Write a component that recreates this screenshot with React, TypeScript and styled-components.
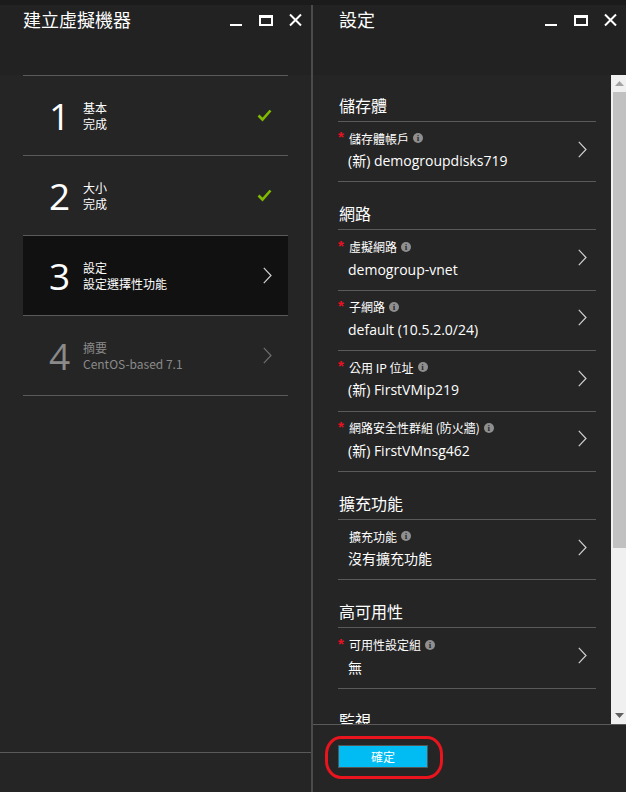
import React from "react";
import styled, { createGlobalStyle } from "styled-components";

const Global = createGlobalStyle`
  html, body { margin: 0; padding: 0; background: #252525; overflow: hidden; }
  body { font-family: "Segoe UI", "Open Sans", "Noto Sans CJK TC", sans-serif; color: #fff; }
  * { box-sizing: border-box; }
`;

const Screen = styled.div`
  width: 626px;
  height: 792px;
  display: flex;
  flex-direction: column;
  background: #1b1b1b;
  padding-top: 5px;
`;

const Blades = styled.div`
  flex: 1;
  display: flex;
  min-height: 0;
`;

const Blade = styled.section<{ $width?: number; $divider?: boolean }>`
  ${(p) => (p.$width ? `width: ${p.$width}px; flex: none;` : "flex: 1; min-width: 0;")}
  display: flex;
  flex-direction: column;
  background: #252525;
  border-right: ${(p) => (p.$divider ? "2px solid #4b4b4b" : "none")};
`;

const Header = styled.header<{ $pad: number }>`
  height: 70px;
  flex: none;
  background: #222222;
  display: flex;
  align-items: flex-start;
  justify-content: space-between;
  padding: 1px 9px 0 ${(p) => p.$pad}px;
`;

const Title = styled.h1`
  margin: 0;
  font-family: "Noto Sans CJK TC", sans-serif;
  font-weight: 400;
  font-size: 18px;
  line-height: 26px;
  color: #fff;
`;

const Controls = styled.div`
  display: flex;
  align-items: center;
  gap: 16px;
  height: 26px;
  padding-top: 1px;
`;

const Ctl = styled.svg`
  display: block;
  flex: none;
`;

function WindowControls() {
  return (
    <Controls>
      <Ctl width="13" height="14" viewBox="0 0 13 14">
        <rect x="0" y="11" width="12" height="2" fill="#fff" />
      </Ctl>
      <Ctl width="14" height="14" viewBox="0 0 14 14">
        <rect x="1" y="3" width="12" height="9" fill="none" stroke="#fff" strokeWidth="2" />
        <rect x="0" y="2" width="14" height="3" fill="#fff" />
      </Ctl>
      <Ctl width="13" height="14" viewBox="0 0 13 14">
        <path d="M1 1.5 L12 12.5 M12 1.5 L1 12.5" stroke="#fff" strokeWidth="2" />
      </Ctl>
    </Controls>
  );
}

/* ---------- left blade ---------- */

const LeftBody = styled.div`
  flex: 1;
  display: flex;
  flex-direction: column;
  min-height: 0;
`;

const StepList = styled.ul`
  list-style: none;
  margin: 0 23px;
  padding: 0;
  border-top: 1px solid #5a5a5a;
`;

const Step = styled.li<{ $active?: boolean; $disabled?: boolean }>`
  height: 80px;
  border-bottom: 1px solid #5a5a5a;
  display: flex;
  align-items: center;
  padding: 0 16px 0 26px;
  background: ${(p) => (p.$active ? "#111111" : "transparent")};
  color: ${(p) => (p.$disabled ? "#8a8a8a" : "#ffffff")};
`;

const StepNum = styled.div`
  width: 34px;
  flex: none;
  font-family: "Segoe UI", "Open Sans", sans-serif;
  font-weight: 400;
  font-size: 37px;
  line-height: 40px;
  padding-top: 1px;
`;

const StepText = styled.div`
  flex: 1;
  display: flex;
  flex-direction: column;
  font-family: "Segoe UI", "Noto Sans CJK TC", sans-serif;
  font-size: 12px;
  line-height: 16px;
`;

const LeftFooter = styled.div`
  margin-top: auto;
  height: 40px;
  border-top: 1px solid #5a5a5a;
`;

function Check() {
  return (
    <svg width="15" height="13" viewBox="0 0 15 13">
      <polyline points="1.5,6.5 5.5,10.5 13.5,1.5" fill="none" stroke="#7fba00" strokeWidth="2.6" />
    </svg>
  );
}

function Chevron({ color = "#d0d0d0" }: { color?: string }) {
  return (
    <svg width="9" height="17" viewBox="0 0 9 17">
      <polyline points="0.8,0.8 8,8.5 0.8,16.2" fill="none" stroke={color} strokeWidth="1.2" />
    </svg>
  );
}

const steps = [
  { n: "1", a: "基本", b: "完成", state: "done" },
  { n: "2", a: "大小", b: "完成", state: "done" },
  { n: "3", a: "設定", b: "設定選擇性功能", state: "active" },
  { n: "4", a: "摘要", b: "CentOS-based 7.1", state: "disabled" },
];

/* ---------- right blade ---------- */

const RightBody = styled.div`
  flex: 1;
  display: flex;
  min-height: 0;
  overflow: hidden;
`;

const Content = styled.div`
  flex: 1;
  padding: 0 15px 0 25px;
  overflow: hidden;
`;

const SectionTitle = styled.h2<{ $first?: boolean }>`
  margin: 0;
  font-family: "Noto Sans CJK TC", sans-serif;
  font-weight: 400;
  font-size: 16px;
  line-height: 20px;
  color: #fff;
  padding: ${(p) => (p.$first ? "20px" : "21px")} 0 6px 1px;
  border-bottom: 1px solid #5a5a5a;
`;

const Item = styled.div`
  height: 60.4px;
  border-bottom: 1px solid #5a5a5a;
  display: flex;
  align-items: center;
`;

const ItemMain = styled.div`
  flex: 1;
  display: flex;
  flex-direction: column;
  margin-top: -3px;
`;

const LabelRow = styled.div`
  display: flex;
  align-items: center;
  height: 16px;
  font-family: "Noto Sans CJK TC", sans-serif;
  font-size: 12px;
  color: #fff;
`;

const Star = styled.span<{ $show: boolean }>`
  width: 11px;
  flex: none;
  color: #e81123;
  font-family: "Liberation Sans", sans-serif;
  font-weight: 700;
  font-size: 15px;
  line-height: 15px;
  visibility: ${(p) => (p.$show ? "visible" : "hidden")};
  align-self: flex-start;
  margin-top: -1px;
`;

const Info = styled.span`
  width: 10px;
  height: 10px;
  border-radius: 50%;
  background: #8f8f8f;
  color: #2a2a2a;
  font-family: "Liberation Serif", serif;
  font-weight: 700;
  font-size: 9px;
  line-height: 10px;
  text-align: center;
  margin-left: 4px;
  flex: none;
`;

const Value = styled.div`
  margin-top: 6px;
  padding-left: 10px;
  font-family: "Segoe UI", "Open Sans", "Noto Sans CJK TC", sans-serif;
  font-size: 14px;
  line-height: 18px;
  color: #fff;
`;

const ItemChevron = styled.div`
  flex: none;
  width: 18px;
  display: flex;
  align-items: center;
  margin-top: -5px;
`;

const Scrollbar = styled.div`
  width: 15px;
  flex: none;
  background: #f0f0f0;
  display: flex;
  flex-direction: column;
`;

const Arrow = styled.div`
  height: 17px;
  flex: none;
  display: flex;
  align-items: center;
  justify-content: center;
  padding-left: 2px;
`;

const Thumb = styled.div`
  height: 456px;
  margin-left: 2px;
  background: #c1c1c1;
`;

const Track = styled.div`
  flex: 1;
`;

const RightFooter = styled.div`
  height: 68px;
  flex: none;
  border-top: 1px solid #5a5a5a;
  padding: 11px 0 0 12px;
`;

const Highlight = styled.div`
  display: inline-block;
  border: 3px solid #e8141e;
  border-radius: 16px / 18px;
  padding: 6px 12px 8px 10px;
`;

const OkButton = styled.button`
  width: 90px;
  height: 23px;
  background: #00bcf2;
  border: 1px solid #555;
  color: #fff;
  font-family: "Noto Sans CJK TC", sans-serif;
  font-size: 12px;
  padding: 0;
  display: block;
`;

type Field = { label: string; value: string; req: boolean };
const sections: { title: string; items: Field[] }[] = [
  { title: "儲存體", items: [{ label: "儲存體帳戶", value: "(新) demogroupdisks719", req: true }] },
  {
    title: "網路",
    items: [
      { label: "虛擬網路", value: "demogroup-vnet", req: true },
      { label: "子網路", value: "default (10.5.2.0/24)", req: true },
      { label: "公用 IP 位址", value: "(新) FirstVMip219", req: true },
      { label: "網路安全性群組 (防火牆)", value: "(新) FirstVMnsg462", req: true },
    ],
  },
  { title: "擴充功能", items: [{ label: "擴充功能", value: "沒有擴充功能", req: false }] },
  { title: "高可用性", items: [{ label: "可用性設定組", value: "無", req: true }] },
  { title: "監視", items: [] },
];

export default function App() {
  return (
    <>
      <Global />
      <Screen>
        <Blades>
          <Blade $width={313} $divider>
            <Header $pad={23}>
              <Title>建立虛擬機器</Title>
              <WindowControls />
            </Header>
            <LeftBody>
              <StepList>
                {steps.map((s) => (
                  <Step key={s.n} $active={s.state === "active"} $disabled={s.state === "disabled"}>
                    <StepNum>{s.n}</StepNum>
                    <StepText>
                      <span>{s.a}</span>
                      <span>{s.b}</span>
                    </StepText>
                    {s.state === "done" ? (
                      <Check />
                    ) : (
                      <Chevron color={s.state === "disabled" ? "#6e6e6e" : "#d0d0d0"} />
                    )}
                  </Step>
                ))}
              </StepList>
              <LeftFooter />
            </LeftBody>
          </Blade>
          <Blade>
            <Header $pad={26}>
              <Title>設定</Title>
              <WindowControls />
            </Header>
            <RightBody>
              <Content>
                {sections.map((sec, i) => (
                  <React.Fragment key={sec.title}>
                    <SectionTitle $first={i === 0}>{sec.title}</SectionTitle>
                    {sec.items.map((it) => (
                      <Item key={it.label}>
                        <ItemMain>
                          <LabelRow>
                            <Star $show={it.req}>*</Star>
                            {it.label}
                            <Info>i</Info>
                          </LabelRow>
                          <Value>{it.value}</Value>
                        </ItemMain>
                        <ItemChevron>
                          <Chevron />
                        </ItemChevron>
                      </Item>
                    ))}
                  </React.Fragment>
                ))}
              </Content>
              <Scrollbar>
                <Arrow>
                  <svg width="9" height="5" viewBox="0 0 9 5">
                    <polygon points="0,5 9,5 4.5,0" fill="#a3a3a3" />
                  </svg>
                </Arrow>
                <Thumb />
                <Track />
                <Arrow>
                  <svg width="9" height="5" viewBox="0 0 9 5">
                    <polygon points="0,0 9,0 4.5,5" fill="#606060" />
                  </svg>
                </Arrow>
              </Scrollbar>
            </RightBody>
            <RightFooter>
              <Highlight>
                <OkButton>確定</OkButton>
              </Highlight>
            </RightFooter>
          </Blade>
        </Blades>
      </Screen>
    </>
  );
}
